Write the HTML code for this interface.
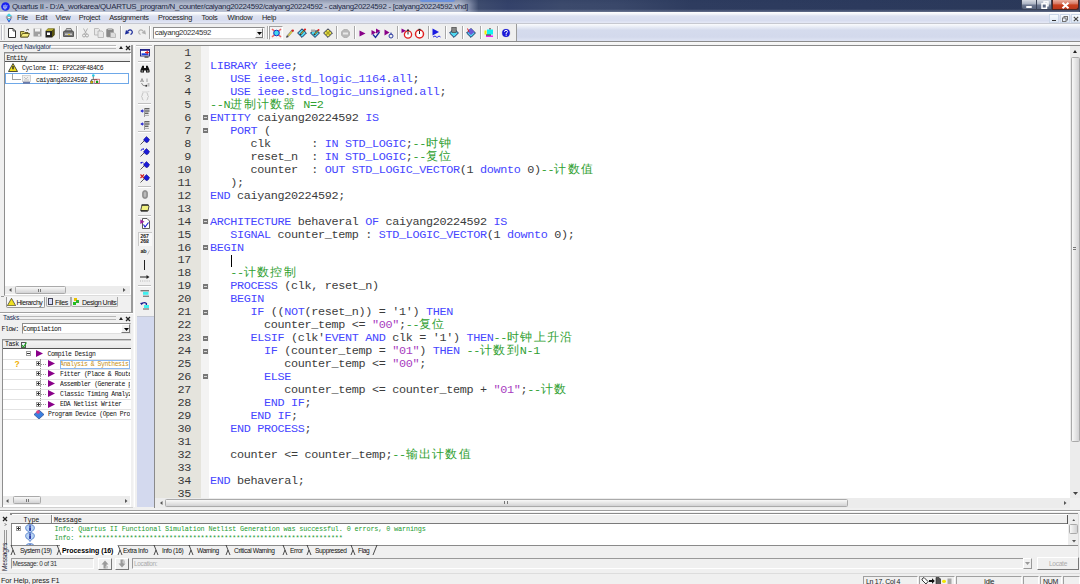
<!DOCTYPE html><html><head><meta charset="utf-8"><style>
html,body{margin:0;padding:0;}
body{width:1080px;height:584px;overflow:hidden;position:relative;background:#f0f0f0;font-family:"Liberation Sans",sans-serif;}
div{box-sizing:border-box;}
.kw{color:#4646ff}.cm{color:#30a030}.st{color:#a83cc0}.cj{letter-spacing:1.25px;font-size:12.25px}
</style></head><body>
<div style="position:absolute;left:0px;top:0px;width:1080px;height:12px;background:linear-gradient(90deg,#aab3c8 0%,#b4bccf 30%,#aeb6ca 42.6%,#7d88a4 43.5%,#3e4c6e 44.3%,#34426a 47%,#3c4a6c 52%,#3a486a 57%,#2e3c5f 64%,#2c3a5d 80%,#2a3858 100%)"></div>
<div style="position:absolute;left:0px;top:0px;width:1080px;height:12px;background:linear-gradient(rgba(40,55,90,0.25),rgba(255,255,255,0) 35%,rgba(255,255,255,0) 75%,rgba(200,205,220,0.35))"></div>
<div style="position:absolute;left:420px;top:0px;width:35px;height:2px;background:#5a8ae8;opacity:.7;border-radius:0 0 6px 6px"></div>
<svg style="position:absolute;left:0.5px;top:1.5px" width="9" height="9" viewBox="0 0 9 9"><circle cx="4.5" cy="4.5" r="4.3" fill="#1a22f0"/><path d="M2.5 6 L3 3 M4 6.5 L4.3 2.5 M5.5 6 L6 3" stroke="#9aa8f8" stroke-width="1.1"/><circle cx="4" cy="6" r="1.5" fill="#8a9af0"/></svg>
<div style="position:absolute;left:12px;top:2.51px;font:normal 7.9px/7.9px 'Liberation Sans', sans-serif;color:#232a45;letter-spacing:-0.3px;white-space:pre;">Quartus II - D:/A_workarea/QUARTUS_program/N_counter/caiyang20224592/caiyang20224592 - caiyang20224592 - [caiyang20224592.vhd]</div>
<div style="position:absolute;left:1021px;top:0px;width:16px;height:10px;background:linear-gradient(#d6dae2,#aab2c2 45%,#6d7890 55%,#59657e);border:1px solid #3a4358;border-top:none;border-radius:0 0 0 3px"></div>
<div style="position:absolute;left:1026px;top:5.5px;width:6px;height:2.5px;background:#fff;border-radius:1px"></div>
<div style="position:absolute;left:1037px;top:0px;width:15px;height:10px;background:linear-gradient(#d6dae2,#aab2c2 45%,#6d7890 55%,#59657e);border:1px solid #3a4358;border-top:none;border-left:none"></div>
<svg style="position:absolute;left:1041px;top:1px" width="8" height="8"><rect x="3" y="0.8" width="4" height="4" fill="none" stroke="#fff" stroke-width="1.4"/><rect x="1" y="2.8" width="4.5" height="4.5" fill="#5e6a84" stroke="#fff" stroke-width="1.5"/></svg>
<div style="position:absolute;left:1052px;top:0px;width:27px;height:10px;background:linear-gradient(#eab0a0,#d87a66 40%,#c8401e 55%,#b8381e);border:1px solid #50241e;border-top:none;border-radius:0 0 3px 0"></div>
<svg style="position:absolute;left:1061px;top:1.5px" width="9" height="7"><path d="M1.5 0.8 L7.5 6.2 M7.5 0.8 L1.5 6.2" stroke="#fff" stroke-width="2"/></svg>
<div style="position:absolute;left:1079px;top:0px;width:1px;height:12px;background:#3a4560"></div>
<div style="position:absolute;left:0px;top:12px;width:1080px;height:11.5px;background:linear-gradient(#ffffff 0px,#f3f5fa 2px,#dce1f0 4px,#d8ddef 8.5px,#e2e6f4 10.5px)"></div>
<div style="position:absolute;left:0px;top:23.2px;width:1080px;height:1px;background:#c6c8d0"></div>
<svg style="position:absolute;left:4.5px;top:13px" width="8" height="10" viewBox="0 0 8 10"><path d="M4 0.5 L7.5 4 L4 9.5 L0.5 4Z" fill="#a0a0a8"/><path d="M4 0.5 L7 3 L4 3.5 L1.5 2.5Z" fill="#40d8e8"/><path d="M1.5 5.5 L4 9.5 L6.5 5.5 L4 6.5Z" fill="#2040d0"/><path d="M2.5 6 L4 8 L5.5 6Z" fill="#50e0f0"/><rect x="3" y="4" width="2" height="1" fill="#fff"/></svg>
<div style="position:absolute;left:17px;top:14.24px;font:normal 7.4px/7.4px 'Liberation Sans', sans-serif;color:#222;letter-spacing:-0.25px;white-space:pre;">File</div>
<div style="position:absolute;left:35.5px;top:14.24px;font:normal 7.4px/7.4px 'Liberation Sans', sans-serif;color:#222;letter-spacing:-0.25px;white-space:pre;">Edit</div>
<div style="position:absolute;left:55.5px;top:14.24px;font:normal 7.4px/7.4px 'Liberation Sans', sans-serif;color:#222;letter-spacing:-0.25px;white-space:pre;">View</div>
<div style="position:absolute;left:78.8px;top:14.24px;font:normal 7.4px/7.4px 'Liberation Sans', sans-serif;color:#222;letter-spacing:-0.25px;white-space:pre;">Project</div>
<div style="position:absolute;left:109.2px;top:14.24px;font:normal 7.4px/7.4px 'Liberation Sans', sans-serif;color:#222;letter-spacing:-0.25px;white-space:pre;">Assignments</div>
<div style="position:absolute;left:158px;top:14.24px;font:normal 7.4px/7.4px 'Liberation Sans', sans-serif;color:#222;letter-spacing:-0.25px;white-space:pre;">Processing</div>
<div style="position:absolute;left:201.5px;top:14.24px;font:normal 7.4px/7.4px 'Liberation Sans', sans-serif;color:#222;letter-spacing:-0.25px;white-space:pre;">Tools</div>
<div style="position:absolute;left:227.5px;top:14.24px;font:normal 7.4px/7.4px 'Liberation Sans', sans-serif;color:#222;letter-spacing:-0.25px;white-space:pre;">Window</div>
<div style="position:absolute;left:262px;top:14.24px;font:normal 7.4px/7.4px 'Liberation Sans', sans-serif;color:#222;letter-spacing:-0.25px;white-space:pre;">Help</div>
<div style="position:absolute;left:1049px;top:14px;width:9.5px;height:9px;background:linear-gradient(#f8fbfe,#dfe9f6);border:1px solid #cbd7e8"></div>
<div style="position:absolute;left:1060px;top:14px;width:9.5px;height:9px;background:linear-gradient(#f8fbfe,#dfe9f6);border:1px solid #cbd7e8"></div>
<div style="position:absolute;left:1071px;top:14px;width:9.5px;height:9px;background:linear-gradient(#f8fbfe,#dfe9f6);border:1px solid #cbd7e8"></div>
<div style="position:absolute;left:1051.5px;top:19.5px;width:4.5px;height:1.2px;background:#333"></div>
<svg style="position:absolute;left:1062px;top:15.5px" width="6" height="6"><rect x="2" y="0.5" width="3.5" height="3.5" fill="none" stroke="#666" stroke-width="0.9"/><rect x="0.5" y="2" width="3.5" height="3.5" fill="#e8eef8" stroke="#666" stroke-width="0.9"/></svg>
<svg style="position:absolute;left:1072.5px;top:16px" width="6" height="6"><path d="M0.8 0.8 L5.2 5.2 M5.2 0.8 L0.8 5.2" stroke="#444" stroke-width="1.1"/></svg>
<div style="position:absolute;left:0px;top:24.2px;width:1080px;height:17px;background:linear-gradient(#fafbfd 0px,#eef1f8 2px,#d5dbed 6px,#d3d9ec 13px,#dde2f2 16px)"></div>
<div style="position:absolute;left:0px;top:24px;width:516px;height:17.2px;background:#efefef"></div>
<div style="position:absolute;left:516px;top:24px;width:1px;height:17.2px;background:#9a9a9a"></div>
<div style="position:absolute;left:0px;top:41px;width:1080px;height:1px;background:#8c8c8c"></div>
<div style="position:absolute;left:1px;top:25px;width:2px;height:15px;border-left:1px solid #c0c0c8;border-right:1px solid #fff"></div>
<div style="position:absolute;left:3.5px;top:25px;width:1px;height:15px;background:#d0d0d0"></div>
<div style="position:absolute;left:59px;top:25.5px;width:2px;height:13.5px;border-left:1px solid #a8a8a8;border-right:1px solid #fff"></div>
<div style="position:absolute;left:76px;top:25.5px;width:2px;height:13.5px;border-left:1px solid #a8a8a8;border-right:1px solid #fff"></div>
<div style="position:absolute;left:120px;top:25.5px;width:2px;height:13.5px;border-left:1px solid #a8a8a8;border-right:1px solid #fff"></div>
<div style="position:absolute;left:149px;top:25.5px;width:2px;height:13.5px;border-left:1px solid #a8a8a8;border-right:1px solid #fff"></div>
<div style="position:absolute;left:267px;top:25.5px;width:2px;height:13.5px;border-left:1px solid #a8a8a8;border-right:1px solid #fff"></div>
<div style="position:absolute;left:336px;top:25.5px;width:2px;height:13.5px;border-left:1px solid #a8a8a8;border-right:1px solid #fff"></div>
<div style="position:absolute;left:354px;top:25.5px;width:2px;height:13.5px;border-left:1px solid #a8a8a8;border-right:1px solid #fff"></div>
<div style="position:absolute;left:397px;top:25.5px;width:2px;height:13.5px;border-left:1px solid #a8a8a8;border-right:1px solid #fff"></div>
<div style="position:absolute;left:428px;top:25.5px;width:2px;height:13.5px;border-left:1px solid #a8a8a8;border-right:1px solid #fff"></div>
<div style="position:absolute;left:445px;top:25.5px;width:2px;height:13.5px;border-left:1px solid #a8a8a8;border-right:1px solid #fff"></div>
<div style="position:absolute;left:462px;top:25.5px;width:2px;height:13.5px;border-left:1px solid #a8a8a8;border-right:1px solid #fff"></div>
<div style="position:absolute;left:480px;top:25.5px;width:2px;height:13.5px;border-left:1px solid #a8a8a8;border-right:1px solid #fff"></div>
<div style="position:absolute;left:497px;top:25.5px;width:2px;height:13.5px;border-left:1px solid #a8a8a8;border-right:1px solid #fff"></div>
<svg style="position:absolute;left:8px;top:27.5px" width="8" height="10" viewBox="0 0 8 10"><path d="M0.5 0.5 H5 L7.5 3 V9.5 H0.5Z" fill="#fff" stroke="#333" stroke-width="1"/><path d="M5 0.5 V3 H7.5" fill="none" stroke="#333" stroke-width="0.8"/></svg>
<svg style="position:absolute;left:20px;top:27.5px" width="10" height="10" viewBox="0 0 10 10"><path d="M0.5 3.5 H4 L5 4.5 H8 V9 H0.5Z" fill="#d8d060" stroke="#4a4210" stroke-width="0.8"/><path d="M0.5 9 L2.5 5.5 H9.5 L8 9Z" fill="#f4ec80" stroke="#4a4210" stroke-width="0.8"/><path d="M6 2.5 Q7.5 0.5 9 2" fill="none" stroke="#333" stroke-width="0.8"/></svg>
<svg style="position:absolute;left:33px;top:28px" width="9" height="9" viewBox="0 0 9 9"><rect x="0.5" y="0.5" width="8" height="8" fill="#a0a0a0"/><rect x="2" y="0.5" width="5" height="3" fill="#f4f4f4"/><rect x="5" y="6" width="2" height="2" fill="#ddd"/></svg>
<svg style="position:absolute;left:45px;top:27.5px" width="10" height="10" viewBox="0 0 10 10"><path d="M0.5 3 L3 0.5 H9.5 V7 L7 9.5 H0.5Z" fill="#222"/><path d="M0.5 3 L3 0.5 H9.5 L7 3Z" fill="#b0a830"/><path d="M7 3 L9.5 0.5 V7 L7 9.5Z" fill="#5a5410"/><rect x="2" y="4.5" width="3" height="2.5" fill="#fff"/></svg>
<svg style="position:absolute;left:63px;top:27.5px" width="11" height="10" viewBox="0 0 11 10"><path d="M2.5 3 L3.5 0.5 H8 L9 3Z" fill="#ccc" stroke="#555" stroke-width="0.7"/><path d="M0.5 4 Q0.5 3 2 3 H9 Q10.5 3 10.5 4 V8.5 H0.5Z" fill="#777" stroke="#333" stroke-width="0.7"/><rect x="2" y="5.5" width="7" height="1.5" fill="#c8c8c8"/><rect x="5" y="6" width="2" height="1" fill="#d8c020"/></svg>
<svg style="position:absolute;left:82px;top:27.5px" width="7" height="10" viewBox="0 0 7 10"><path d="M1.5 0.5 L4.5 6 M5.5 0.5 L2.5 6" stroke="#a8a8a8" stroke-width="0.9"/><circle cx="2" cy="7.5" r="1.5" fill="none" stroke="#a8a8a8"/><circle cx="5" cy="7.5" r="1.5" fill="none" stroke="#a8a8a8"/></svg>
<svg style="position:absolute;left:94px;top:27.5px" width="10" height="10" viewBox="0 0 10 10"><path d="M0.5 0.5 H4.5 L5.5 1.5 V7 H0.5Z" fill="#e8e8e8" stroke="#b0b0b0" stroke-width="0.8"/><path d="M4 3 H8 L9.5 4.5 V9.5 H4Z" fill="#e8e8e8" stroke="#b0b0b0" stroke-width="0.8"/></svg>
<svg style="position:absolute;left:106px;top:28px" width="10" height="10" viewBox="0 0 10 10"><rect x="0.5" y="1" width="7" height="8" rx="1" fill="#888" stroke="#999" stroke-width="0.6"/><rect x="2" y="0" width="4" height="2" fill="#bbb"/><path d="M4.5 4.5 H8 L9.5 6 V9.5 H4.5Z" fill="#ddd" stroke="#aaa" stroke-width="0.7"/></svg>
<svg style="position:absolute;left:124.5px;top:29px" width="8" height="6" viewBox="0 0 8 6"><path d="M2.5 2.5 Q5 -0.5 7 2 Q8 4.5 5.5 5.5" fill="none" stroke="#1a2a9a" stroke-width="1.2"/><path d="M0 5.5 L1 1 L4.5 4Z" fill="#1a2a9a"/></svg>
<svg style="position:absolute;left:138px;top:29px" width="8" height="6" viewBox="0 0 8 6"><path d="M5.5 2.5 Q3 -0.5 1 2 Q0 4.5 2.5 5.5" fill="none" stroke="#b0b0b0" stroke-width="1.1"/><path d="M8 5.5 L7 1 L3.5 4Z" fill="#b0b0b0"/></svg>
<div style="position:absolute;left:152.5px;top:27px;width:112px;height:11.5px;background:#fff;border:1px solid #8d8d8d;border-right-color:#ddd;border-bottom-color:#ddd"></div>
<div style="position:absolute;left:255px;top:28px;width:8px;height:9.5px;background:#f0f0f0;border:1px solid #fff;border-right-color:#777;border-bottom-color:#777"></div>
<svg style="position:absolute;left:256.5px;top:31.8px" width="5" height="3"><polygon points="0,0 5,0 2.5,3" fill="#000"/></svg>
<div style="position:absolute;left:154.7px;top:29.30px;font:normal 7.8px/7.8px 'Liberation Sans', sans-serif;color:#333;letter-spacing:-0.35px;white-space:pre;">caiyang20224592</div>
<div style="position:absolute;left:269px;top:26px;width:13.5px;height:13.5px;background:#f4f4f4;border:1px solid #a0a0a0;border-right-color:#fff;border-bottom-color:#fff"></div>
<svg style="position:absolute;left:271px;top:28px" width="11" height="10" viewBox="0 0 11 10"><path d="M1 1 L10 9 M10 1 L1 9" stroke="#f04848" stroke-width="1.6" opacity="0.85"/><circle cx="5.5" cy="5" r="2.8" fill="#40d8f0" stroke="#1a30c0" stroke-width="1"/></svg>
<svg style="position:absolute;left:286px;top:28.5px" width="8" height="9" viewBox="0 0 8 9"><path d="M1 8 L6.5 1.5" stroke="#888" stroke-width="2.2"/><path d="M2.5 6.5 L6 2.5" stroke="#e0d040" stroke-width="1.4"/><circle cx="6.8" cy="1.6" r="1.2" fill="#d02020"/><path d="M0.5 8.5 L1.5 7" stroke="#333" stroke-width="1.2"/></svg>
<svg style="position:absolute;left:297px;top:27.5px" width="10" height="10" viewBox="0 0 10 10"><path d="M5 0.8 L9.4 5 L5 9.4 L0.6 5Z" fill="#50d8f0" stroke="#101850" stroke-width="0.9"/><path d="M3 7 L7.5 2" stroke="#333" stroke-width="1.8"/><path d="M3.8 6 L7 2.7" stroke="#e0d040" stroke-width="0.9"/><circle cx="8" cy="1.5" r="1.1" fill="#e02020"/></svg>
<svg style="position:absolute;left:310px;top:27.5px" width="10" height="10" viewBox="0 0 10 10"><path d="M0.5 5 L5 9.4 L9.5 5 L7 3 H3Z" fill="#50d8f0" stroke="#101850" stroke-width="0.9"/><rect x="1" y="1.5" width="4" height="2.5" fill="#aaa"/><path d="M4 7 L8 2.5" stroke="#333" stroke-width="1.8"/><path d="M4.8 6 L7.5 3" stroke="#e0d040" stroke-width="0.9"/><circle cx="8.5" cy="2" r="1" fill="#e02020"/></svg>
<svg style="position:absolute;left:323px;top:27.5px" width="10" height="10" viewBox="0 0 10 10"><path d="M5 0.8 L9.4 5 L5 9.4 L0.6 5Z" fill="#e8e050" stroke="#101850" stroke-width="0.9"/><path d="M3 3 L7 7 M7 3 L3 7" stroke="#a8a020" stroke-width="1.2"/></svg>
<svg style="position:absolute;left:341px;top:28.5px" width="9" height="9" viewBox="0 0 9 9"><path d="M2.8 0.5 H6.2 L8.5 2.8 V6.2 L6.2 8.5 H2.8 L0.5 6.2 V2.8Z" fill="#b8b8b8" stroke="#a0a0a0" stroke-width="0.6"/><rect x="2" y="3.5" width="5" height="2" fill="#e8e8e8"/></svg>
<svg style="position:absolute;left:358.5px;top:29.5px" width="7" height="7" viewBox="0 0 7 7"><path d="M0.5 0.5 L6.5 3.5 L0.5 6.5Z" fill="#880088"/></svg>
<svg style="position:absolute;left:370.5px;top:27.5px" width="10" height="11" viewBox="0 0 10 11"><path d="M0.5 2 L5 4.5 L0.5 7Z" fill="#880088"/><path d="M5 0.5 L9.5 3 L5 5.5Z" fill="#880088"/><path d="M2 6.5 L4.5 9.5 L8.5 4" fill="none" stroke="#1a2a9a" stroke-width="1.3"/></svg>
<svg style="position:absolute;left:383.5px;top:28.5px" width="10" height="10" viewBox="0 0 10 10"><path d="M0.5 0.5 L5.5 3.5 L0.5 6.5Z" fill="#880088"/><circle cx="7" cy="7" r="2" fill="none" stroke="#1a2a9a" stroke-width="0.9"/><path d="M7 3.5 V6" stroke="#1a2a9a" stroke-width="0.9"/></svg>
<svg style="position:absolute;left:400.5px;top:27.5px" width="12" height="11" viewBox="0 0 12 11"><path d="M0.5 0.5 L5 2.8 L0.5 5Z" fill="#880088"/><circle cx="7" cy="6.5" r="3.6" fill="#fff" stroke="#e02020" stroke-width="1.3"/><path d="M7 3.5 V6.5" stroke="#222" stroke-width="1"/><rect x="6" y="1.5" width="2" height="1.5" fill="#222"/></svg>
<svg style="position:absolute;left:413.5px;top:27.5px" width="11" height="11" viewBox="0 0 11 11"><circle cx="5.5" cy="6" r="4" fill="#fff" stroke="#e02020" stroke-width="1.5"/><path d="M5.5 3 V6" stroke="#222" stroke-width="1"/><rect x="4.5" y="0.8" width="2" height="1.5" fill="#222"/></svg>
<svg style="position:absolute;left:431.5px;top:28px" width="9" height="10" viewBox="0 0 9 10"><path d="M0.5 0.5 L7 4 L0.5 7.5Z" fill="#1a1ae0"/><path d="M1 9 L3 8 L5 9.5 L7 8 L8.5 9" fill="none" stroke="#1a1ae0" stroke-width="0.9"/></svg>
<svg style="position:absolute;left:448.5px;top:27px" width="10" height="11" viewBox="0 0 10 11"><path d="M5 1.5 L9.4 6 L5 10.4 L0.6 6Z" fill="#50d8f0" stroke="#101850" stroke-width="0.9"/><rect x="2.8" y="0.5" width="4.4" height="5" fill="#888" stroke="#333" stroke-width="0.6"/></svg>
<svg style="position:absolute;left:466px;top:27px" width="10" height="11" viewBox="0 0 10 11"><path d="M5 1.5 L9.4 6 L5 10.4 L0.6 6Z" fill="#50d8f0" stroke="#101850" stroke-width="0.9"/><path d="M2 3 L5 1.5 L8.5 5 L5 8 L2.5 6Z" fill="#6a5ad8"/><path d="M1.5 1.5 L3 5" stroke="#e02020" stroke-width="1"/></svg>
<svg style="position:absolute;left:483.5px;top:27.5px" width="10" height="10" viewBox="0 0 10 10"><rect x="3" y="1.5" width="6" height="5" fill="#10f0f0"/><rect x="0.5" y="2.5" width="2" height="4" fill="#f0f000"/><rect x="5.5" y="0" width="1" height="1.5" fill="#222"/><rect x="2" y="7.5" width="7" height="1.5" fill="#f020f0"/><rect x="2" y="6.5" width="5" height="1" fill="#222"/></svg>
<svg style="position:absolute;left:500.5px;top:27.5px" width="10" height="10" viewBox="0 0 10 10"><circle cx="5" cy="5" r="4.6" fill="#d8d8e0"/><circle cx="5" cy="5" r="3.9" fill="#1a1ad8"/><path d="M3.5 3.8 Q3.5 2.3 5 2.3 Q6.5 2.3 6.5 3.6 Q6.5 4.6 5.2 5 V6" fill="none" stroke="#fff" stroke-width="1"/><rect x="4.6" y="6.6" width="1.2" height="1.1" fill="#fff"/></svg>
<div style="position:absolute;left:0px;top:42px;width:1080px;height:3.5px;background:linear-gradient(#fafafa,#f0f0f0)"></div>
<div style="position:absolute;left:3px;top:43.61px;font:normal 6.6px/6.6px 'Liberation Sans', sans-serif;color:#223355;letter-spacing:-0.15px;white-space:pre;">Project Navigator</div>
<div style="position:absolute;left:51px;top:45px;width:65px;height:4px;border-top:1px solid #b8b8b8;border-bottom:1px solid #b8b8b8"></div>
<div style="position:absolute;left:50.5px;top:46px;width:66px;height:1px;background:#fff"></div>
<svg style="position:absolute;left:118.5px;top:46px" width="4" height="3"><polygon points="0,3 4,3 2.0,0" fill="#222"/></svg>
<svg style="position:absolute;left:125px;top:44.5px" width="6" height="6" viewBox="0 0 6 6"><path d="M1 1 L5 5 M5 1 L1 5" stroke="#222" stroke-width="1.3"/></svg>
<div style="position:absolute;left:4px;top:51.5px;width:127.5px;height:244px;background:#fff;border:1px solid #8e8e8e;border-right-color:#dcdcdc;border-bottom-color:#dcdcdc"></div>
<div style="position:absolute;left:5px;top:52.5px;width:125px;height:9px;background:linear-gradient(#f6f6f6,#e9e9e9);border-top:1px solid #ccc;border-bottom:1px solid #555"></div>
<div style="position:absolute;left:6.5px;top:55.54px;font:normal 6.6px/6.6px 'Liberation Mono', monospace;color:#111;letter-spacing:-0.55px;white-space:pre;">Entity</div>
<svg style="position:absolute;left:8px;top:63px" width="10" height="9"><polygon points="5,0.5 9.5,8.5 0.5,8.5" fill="#f0e020" stroke="#222" stroke-width="0.8"/><rect x="4.3" y="3" width="1.4" height="3.3" fill="#222"/></svg>
<div style="position:absolute;left:22px;top:66.49px;font:normal 6.4px/6.4px 'Liberation Mono', monospace;color:#111;letter-spacing:-0.46px;white-space:pre;">Cyclone II: EP2C20F484C6</div>
<div style="position:absolute;left:4.5px;top:73px;width:124px;height:11px;border:1px solid #6ea8e8"></div>
<div style="position:absolute;left:12px;top:74px;width:1px;height:5px;background:#a0a0a0"></div>
<div style="position:absolute;left:12px;top:78.5px;width:9px;height:1px;background:#a0a0a0"></div>
<svg style="position:absolute;left:22px;top:74.5px" width="9" height="9" viewBox="0 0 9 9"><rect x="0.5" y="0.5" width="8" height="6" fill="#f0f0f0" stroke="#c8c8c8" stroke-width="0.8"/><path d="M2 2 L4 4 L6 2 M2 5 H7" stroke="#b0b0b0" stroke-width="0.7" fill="none"/><rect x="1" y="6.8" width="7" height="2" fill="#6a7aa8"/></svg>
<div style="position:absolute;left:36px;top:77.69px;font:normal 6.4px/6.4px 'Liberation Mono', monospace;color:#111;letter-spacing:-0.42px;white-space:pre;">caiyang20224592</div>
<svg style="position:absolute;left:90px;top:74px" width="10" height="10" viewBox="0 0 10 10"><circle cx="3.3" cy="1.5" r="1.3" fill="#20c8e0"/><path d="M3.3 2.5 V5.5 M1.5 5.5 H7 M1.5 5.5 V7 M7 5.5 V7" stroke="#444" stroke-width="0.7" fill="none"/><rect x="0.5" y="7" width="2.5" height="2.5" fill="#d8b800" stroke="#333" stroke-width="0.4"/><rect x="4.8" y="5.2" width="4.5" height="4.3" fill="none" stroke="#c04040" stroke-width="0.7"/><rect x="6" y="7" width="2.2" height="2" fill="#10a010"/></svg>
<div style="position:absolute;left:5px;top:285.5px;width:125px;height:8.5px;background:#ececec"></div>
<svg style="position:absolute;left:8.5px;top:287.8px" width="3" height="4"><polygon points="2.5,0 2.5,4 0,2" fill="#555"/></svg>
<div style="position:absolute;left:15px;top:286px;width:51px;height:7.5px;background:linear-gradient(#f8f8f8,#e6e6e6 50%,#d2d2d4);border:1px solid #aaa;border-radius:1.5px"></div>
<div style="position:absolute;left:38px;top:288.5px;width:3px;height:3px;border-left:1px solid #777;border-right:1px solid #777"></div>
<svg style="position:absolute;left:123px;top:287.8px" width="3" height="4"><polygon points="0,0 0,4 2.5,2" fill="#555"/></svg>
<div style="position:absolute;left:1px;top:296px;width:3px;height:1px;background:#999"></div>
<div style="position:absolute;left:6px;top:296.5px;width:38.5px;height:11px;background:#f8f8f8;border:1px solid #999;border-top:none;border-radius:0 0 2px 2px"></div>
<svg style="position:absolute;left:7px;top:297.5px" width="9" height="8"><polygon points="4.5,0.3 8.7,7.7 0.3,7.7" fill="#f0e020" stroke="#333" stroke-width="0.7"/></svg>
<div style="position:absolute;left:16.5px;top:298.87px;font:normal 7px/7px 'Liberation Sans', sans-serif;color:#111;letter-spacing:-0.45px;white-space:pre;">Hierarchy</div>
<div style="position:absolute;left:45.5px;top:297px;width:25px;height:10px;background:#efefef;border:1px solid #aaa;border-top:none;border-radius:0 0 2px 2px"></div>
<div style="position:absolute;left:48px;top:298px;width:5px;height:7px;background:#d8dcf8;border:1px solid #445"></div>
<div style="position:absolute;left:55px;top:298.87px;font:normal 7px/7px 'Liberation Sans', sans-serif;color:#111;letter-spacing:-0.4px;white-space:pre;">Files</div>
<div style="position:absolute;left:71px;top:297px;width:47px;height:10px;background:#efefef;border:1px solid #aaa;border-top:none;border-radius:0 0 2px 2px"></div>
<div style="position:absolute;left:74px;top:298px;width:3px;height:3px;background:#e8c000"></div>
<div style="position:absolute;left:76px;top:300px;width:3px;height:3px;background:#30b030"></div>
<div style="position:absolute;left:73px;top:302px;width:3px;height:3px;background:#20c020"></div>
<div style="position:absolute;left:82px;top:298.87px;font:normal 7px/7px 'Liberation Sans', sans-serif;color:#111;letter-spacing:-0.45px;white-space:pre;">Design Units</div>
<div style="position:absolute;left:0px;top:311.5px;width:133px;height:2px;border-top:1px solid #a0a0a0;border-bottom:1px solid #fff"></div>
<div style="position:absolute;left:3px;top:314.61px;font:normal 6.6px/6.6px 'Liberation Sans', sans-serif;color:#223355;letter-spacing:-0.15px;white-space:pre;">Tasks</div>
<div style="position:absolute;left:19px;top:316px;width:97px;height:4px;border-top:1px solid #b8b8b8;border-bottom:1px solid #b8b8b8"></div>
<svg style="position:absolute;left:118.5px;top:317px" width="4" height="3"><polygon points="0,3 4,3 2.0,0" fill="#222"/></svg>
<svg style="position:absolute;left:125px;top:315.5px" width="6" height="6" viewBox="0 0 6 6"><path d="M1 1 L5 5 M5 1 L1 5" stroke="#222" stroke-width="1.3"/></svg>
<div style="position:absolute;left:1.5px;top:326.74px;font:normal 6.6px/6.6px 'Liberation Mono', monospace;color:#111;letter-spacing:-0.5px;white-space:pre;">Flow:</div>
<div style="position:absolute;left:21.5px;top:323px;width:109px;height:11px;background:#fff;border:1px solid #8d8d8d;border-right-color:#e0e0e0;border-bottom-color:#e0e0e0"></div>
<div style="position:absolute;left:121px;top:324px;width:9px;height:9px;background:#efefef;border:1px solid #fff;border-right-color:#777;border-bottom-color:#777"></div>
<svg style="position:absolute;left:123.5px;top:327.8px" width="5" height="3"><polygon points="0,0 5,0 2.5,3" fill="#000"/></svg>
<div style="position:absolute;left:23px;top:326.94px;font:normal 6.6px/6.6px 'Liberation Mono', monospace;color:#111;letter-spacing:-0.5px;white-space:pre;">Compilation</div>
<div style="position:absolute;left:2px;top:339px;width:129px;height:168px;background:#fff;border:1px solid #8e8e8e;border-right:none;border-bottom:none"></div>
<div style="position:absolute;left:3px;top:340px;width:128px;height:9px;background:linear-gradient(#f4f4f4,#e8e8e8);border-top:1px solid #ccc;border-bottom:1px solid #555"></div>
<div style="position:absolute;left:5px;top:342.24px;font:normal 6.6px/6.6px 'Liberation Mono', monospace;color:#111;letter-spacing:-0.55px;white-space:pre;">Task</div>
<div style="position:absolute;left:20.5px;top:341.5px;width:5px;height:6px;border:1px solid #555;background:#eef"></div>
<svg style="position:absolute;left:20.5px;top:341.5px" width="6" height="6" viewBox="0 0 6 6"><path d="M1 3 L2.5 5 L5.5 0.5" fill="none" stroke="#2a2" stroke-width="1.2"/></svg>
<div style="position:absolute;left:3px;top:358.5px;width:128px;height:1px;background:#e2e2e2"></div>
<div style="position:absolute;left:3px;top:368.6px;width:128px;height:1px;background:#e2e2e2"></div>
<div style="position:absolute;left:3px;top:378.6px;width:128px;height:1px;background:#e2e2e2"></div>
<div style="position:absolute;left:3px;top:388.6px;width:128px;height:1px;background:#e2e2e2"></div>
<div style="position:absolute;left:3px;top:399px;width:128px;height:1px;background:#e2e2e2"></div>
<div style="position:absolute;left:3px;top:409.4px;width:128px;height:1px;background:#e2e2e2"></div>
<div style="position:absolute;left:3px;top:419.4px;width:128px;height:1px;background:#e2e2e2"></div>
<div style="position:absolute;left:26px;top:351px;width:5px;height:5px;border:1px solid #a0a0a0;background:#fff"></div>
<div style="position:absolute;left:27px;top:353px;width:3px;height:1px;background:#333"></div>
<svg style="position:absolute;left:36px;top:350px" width="7" height="7"><polygon points="0,0 7,3.5 0,7" fill="#8a008a"/></svg>
<div style="position:absolute;left:47.5px;top:351.59px;font:normal 6.4px/6.4px 'Liberation Mono', monospace;color:#111;letter-spacing:-0.42px;white-space:pre;">Compile Design</div>
<div style="position:absolute;left:39.5px;top:358.5px;width:1px;height:46px;border-left:1px dotted #999"></div>
<div style="position:absolute;left:14.5px;top:359.80px;font:bold 8.5px/8.5px 'Liberation Sans', sans-serif;color:#f0b000;letter-spacing:0px;white-space:pre;">?</div>
<div style="position:absolute;left:36px;top:361.0px;width:5px;height:5px;border:1px solid #a0a0a0;background:#fff"></div>
<div style="position:absolute;left:37px;top:363.0px;width:3px;height:1px;background:#333"></div>
<div style="position:absolute;left:38px;top:362.0px;width:1px;height:3px;background:#333"></div>
<div style="position:absolute;left:41px;top:363.5px;width:5px;height:1px;border-top:1px dotted #999"></div>
<svg style="position:absolute;left:48px;top:360.3px" width="7" height="7"><polygon points="0,0 7,3.5 0,7" fill="#8a008a"/></svg>
<div style="position:absolute;left:60px;top:359.59px;font:normal 6.4px/10px 'Liberation Mono', monospace;color:#c89010;letter-spacing:-0.42px;white-space:pre;width:69.5px;overflow:hidden">Analysis & Synthesis</div>
<div style="position:absolute;left:36px;top:371.1px;width:5px;height:5px;border:1px solid #a0a0a0;background:#fff"></div>
<div style="position:absolute;left:37px;top:373.1px;width:3px;height:1px;background:#333"></div>
<div style="position:absolute;left:38px;top:372.1px;width:1px;height:3px;background:#333"></div>
<div style="position:absolute;left:41px;top:373.6px;width:5px;height:1px;border-top:1px dotted #999"></div>
<svg style="position:absolute;left:48px;top:370.40000000000003px" width="7" height="7"><polygon points="0,0 7,3.5 0,7" fill="#8a008a"/></svg>
<div style="position:absolute;left:60px;top:369.69px;font:normal 6.4px/10px 'Liberation Mono', monospace;color:#111;letter-spacing:-0.42px;white-space:pre;width:69.5px;overflow:hidden">Fitter (Place & Route)</div>
<div style="position:absolute;left:36px;top:381.1px;width:5px;height:5px;border:1px solid #a0a0a0;background:#fff"></div>
<div style="position:absolute;left:37px;top:383.1px;width:3px;height:1px;background:#333"></div>
<div style="position:absolute;left:38px;top:382.1px;width:1px;height:3px;background:#333"></div>
<div style="position:absolute;left:41px;top:383.6px;width:5px;height:1px;border-top:1px dotted #999"></div>
<svg style="position:absolute;left:48px;top:380.40000000000003px" width="7" height="7"><polygon points="0,0 7,3.5 0,7" fill="#8a008a"/></svg>
<div style="position:absolute;left:60px;top:379.69px;font:normal 6.4px/10px 'Liberation Mono', monospace;color:#111;letter-spacing:-0.42px;white-space:pre;width:69.5px;overflow:hidden">Assembler (Generate programming files)</div>
<div style="position:absolute;left:36px;top:391.1px;width:5px;height:5px;border:1px solid #a0a0a0;background:#fff"></div>
<div style="position:absolute;left:37px;top:393.1px;width:3px;height:1px;background:#333"></div>
<div style="position:absolute;left:38px;top:392.1px;width:1px;height:3px;background:#333"></div>
<div style="position:absolute;left:41px;top:393.6px;width:5px;height:1px;border-top:1px dotted #999"></div>
<svg style="position:absolute;left:48px;top:390.40000000000003px" width="7" height="7"><polygon points="0,0 7,3.5 0,7" fill="#8a008a"/></svg>
<div style="position:absolute;left:60px;top:389.69px;font:normal 6.4px/10px 'Liberation Mono', monospace;color:#111;letter-spacing:-0.42px;white-space:pre;width:69.5px;overflow:hidden">Classic Timing Analyzer</div>
<div style="position:absolute;left:36px;top:401.5px;width:5px;height:5px;border:1px solid #a0a0a0;background:#fff"></div>
<div style="position:absolute;left:37px;top:403.5px;width:3px;height:1px;background:#333"></div>
<div style="position:absolute;left:38px;top:402.5px;width:1px;height:3px;background:#333"></div>
<div style="position:absolute;left:41px;top:404px;width:5px;height:1px;border-top:1px dotted #999"></div>
<svg style="position:absolute;left:48px;top:400.8px" width="7" height="7"><polygon points="0,0 7,3.5 0,7" fill="#8a008a"/></svg>
<div style="position:absolute;left:60px;top:400.09px;font:normal 6.4px/10px 'Liberation Mono', monospace;color:#111;letter-spacing:-0.42px;white-space:pre;width:69.5px;overflow:hidden">EDA Netlist Writer</div>
<div style="position:absolute;left:59.5px;top:359.5px;width:70px;height:9.5px;border:1px solid #8ab8f0"></div>
<svg style="position:absolute;left:34px;top:410px" width="10" height="9"><polygon points="5,0 10,4.5 5,9 0,4.5" fill="#3b7fe0" stroke="#1a3a80" stroke-width="0.6"/><circle cx="4" cy="2" r="1.8" fill="#e04080"/></svg>
<div style="position:absolute;left:48px;top:410.29px;font:normal 6.4px/10px 'Liberation Mono', monospace;color:#111;letter-spacing:-0.42px;white-space:pre;width:82px;overflow:hidden">Program Device (Open Programmer)</div>
<div style="position:absolute;left:3px;top:495.5px;width:127px;height:9.5px;background:#ececec"></div>
<svg style="position:absolute;left:6.0px;top:498.5px" width="3" height="4"><polygon points="2.5,0 2.5,4 0,2" fill="#555"/></svg>
<div style="position:absolute;left:13.4px;top:496px;width:28px;height:8px;background:linear-gradient(#f8f8f8,#e6e6e6 50%,#d2d2d4);border:1px solid #aaa;border-radius:1.5px"></div>
<div style="position:absolute;left:26px;top:498.5px;width:3px;height:3px;border-left:1px solid #777;border-right:1px solid #777"></div>
<svg style="position:absolute;left:124.5px;top:498.5px" width="3" height="4"><polygon points="0,0 0,4 2.5,2" fill="#555"/></svg>
<div style="position:absolute;left:0px;top:506.5px;width:133px;height:1px;background:#d0d0d0"></div>
<div style="position:absolute;left:131px;top:45px;width:1.5px;height:268px;background:#9a9a9a"></div>
<div style="position:absolute;left:132.5px;top:45px;width:1px;height:462px;background:#f6f6f6"></div>
<div style="position:absolute;left:133.5px;top:45px;width:1px;height:462px;background:#ffffff"></div>
<div style="position:absolute;left:134.5px;top:45px;width:19px;height:271px;background:#f0f0f0"></div>
<div style="position:absolute;left:137px;top:316px;width:16.5px;height:191px;background:#d3d9ee;border-top:1px solid #c4c8d4"></div>
<div style="position:absolute;left:134.5px;top:316px;width:2.5px;height:191px;background:#f0f0f0"></div>
<div style="position:absolute;left:153.5px;top:45px;width:1px;height:462px;background:#a0a0a0"></div>
<div style="position:absolute;left:136px;top:44.5px;width:16px;height:2px;border-top:1px solid #bbb;border-bottom:1px solid #fff"></div>
<div style="position:absolute;left:138px;top:61px;width:13px;height:2px;border-top:1px solid #c0c0c0;border-bottom:1px solid #fff"></div>
<div style="position:absolute;left:138px;top:103px;width:13px;height:2px;border-top:1px solid #c0c0c0;border-bottom:1px solid #fff"></div>
<div style="position:absolute;left:138px;top:131px;width:13px;height:2px;border-top:1px solid #c0c0c0;border-bottom:1px solid #fff"></div>
<div style="position:absolute;left:138px;top:186px;width:13px;height:2px;border-top:1px solid #c0c0c0;border-bottom:1px solid #fff"></div>
<div style="position:absolute;left:138px;top:215.3px;width:13px;height:2px;border-top:1px solid #c0c0c0;border-bottom:1px solid #fff"></div>
<div style="position:absolute;left:138px;top:285px;width:13px;height:2px;border-top:1px solid #c0c0c0;border-bottom:1px solid #fff"></div>
<svg style="position:absolute;left:140px;top:49px" width="10" height="9" viewBox="0 0 10 9"><rect x="0.5" y="0.5" width="9" height="6.5" fill="#fff" stroke="#1a1a70" stroke-width="0.9"/><rect x="0.5" y="0.5" width="9" height="1.3" fill="#1a1a90"/><rect x="1.5" y="4.3" width="7" height="1.8" fill="#1a40e0"/><path d="M5 3.5 H9 M7.2 1.8 V5.2" stroke="#e02020" stroke-width="1.2"/><rect x="4.5" y="7.3" width="4" height="1.5" fill="#555"/></svg>
<svg style="position:absolute;left:140px;top:65px" width="10" height="8" viewBox="0 0 10 8"><path d="M1 7.5 Q0 7.5 0.5 5 L2.3 0.8 H4 V7.5Z M9 7.5 Q10 7.5 9.5 5 L7.7 0.8 H6 V7.5Z" fill="#111"/><rect x="3.5" y="3" width="3" height="2.5" fill="#111"/><circle cx="2.3" cy="6" r="1" fill="#777"/><circle cx="7.7" cy="6" r="1" fill="#777"/></svg>
<svg style="position:absolute;left:140px;top:78px" width="10" height="9" viewBox="0 0 10 9"><path d="M0.5 4 L2 0.5 L3.5 4 M1 3 H3" fill="none" stroke="#888" stroke-width="0.8"/><path d="M1.5 5 Q2 8 6 8" fill="none" stroke="#777" stroke-width="0.8"/><circle cx="6.3" cy="7.8" r="1" fill="#333"/><path d="M7 0.5 V4" stroke="#888" stroke-width="0.8"/><rect x="7.5" y="5" width="2" height="3.5" fill="#bbb"/></svg>
<svg style="position:absolute;left:141px;top:90.5px" width="9" height="10" viewBox="0 0 9 10"><path d="M2.5 2 Q1.2 2 1.2 4 Q1.2 5 0.5 5.5 Q1.2 6 1.2 7 Q1.2 9 2.5 9 M5.5 2 Q6.8 2 6.8 4 Q6.8 5 7.5 5.5 Q6.8 6 6.8 7 Q6.8 9 5.5 9" fill="none" stroke="#b8b8b8" stroke-width="0.8"/><path d="M1 1 H7 L8.5 0" stroke="#c8c8c8" stroke-width="0.7" fill="none"/></svg>
<svg style="position:absolute;left:140px;top:107.5px" width="10" height="9" viewBox="0 0 10 9"><path d="M5 0.8 H9.5 M5 3 H9.5 M5 5.2 H8.5" stroke="#111" stroke-width="0.9"/><path d="M0.3 3 L2.8 1.3 V4.7Z" fill="#1a1ad0"/><path d="M2.5 3 H4" stroke="#1a1ad0" stroke-width="0.9"/><path d="M4.5 0 V9" stroke="#777" stroke-width="0.7"/><path d="M5 7.4 H9" stroke="#999" stroke-width="0.8"/></svg>
<svg style="position:absolute;left:140px;top:120.5px" width="10" height="9" viewBox="0 0 10 9"><path d="M5 0.8 H9.5 M5 3 H9.5 M5 5.2 H8.5" stroke="#111" stroke-width="0.9"/><path d="M0.3 3 L2.8 1.3 V4.7Z" fill="#1a1ad0"/><path d="M2.5 3 H4" stroke="#1a1ad0" stroke-width="0.9"/><path d="M4.5 0 V9" stroke="#777" stroke-width="0.7"/><path d="M5 7.4 H9" stroke="#999" stroke-width="0.8"/></svg>
<svg style="position:absolute;left:140px;top:136px" width="10" height="9" viewBox="0 0 10 9"><path d="M0.5 8.5 L5.5 3.5" stroke="#333" stroke-width="0.8"/><path d="M4.5 2.5 L6.5 0.5 L9.5 3.5 L8.5 5.5 Q7 7.5 5.5 6 L3.5 4Z" fill="#1a1ad8" stroke="#0a0a70" stroke-width="0.5"/></svg>
<svg style="position:absolute;left:140px;top:148px" width="10" height="9" viewBox="0 0 10 9"><path d="M0.5 8.5 L5.5 3.5" stroke="#333" stroke-width="0.8"/><path d="M4.5 2.5 L6.5 0.5 L9.5 3.5 L8.5 5.5 Q7 7.5 5.5 6 L3.5 4Z" fill="#1a1ad8" stroke="#0a0a70" stroke-width="0.5"/><path d="M1 3 Q1 0.5 3.5 1" fill="none" stroke="#1a1ad8" stroke-width="0.8"/><path d="M3 0 L4.3 1.3 L2.8 2Z" fill="#1a1ad8"/></svg>
<svg style="position:absolute;left:140px;top:161px" width="10" height="9" viewBox="0 0 10 9"><path d="M0.5 8.5 L5.5 3.5" stroke="#333" stroke-width="0.8"/><path d="M4.5 2.5 L6.5 0.5 L9.5 3.5 L8.5 5.5 Q7 7.5 5.5 6 L3.5 4Z" fill="#1a1ad8" stroke="#0a0a70" stroke-width="0.5"/><path d="M3.5 2.5 Q3.5 0.5 1 1.5" fill="none" stroke="#1a1ad8" stroke-width="0.8"/><rect x="0.5" y="1" width="1.5" height="1.5" fill="#1a1ad8"/></svg>
<svg style="position:absolute;left:140px;top:174px" width="10" height="9" viewBox="0 0 10 9"><path d="M0.5 8.5 L5.5 3.5" stroke="#333" stroke-width="0.8"/><path d="M4.5 2.5 L6.5 0.5 L9.5 3.5 L8.5 5.5 Q7 7.5 5.5 6 L3.5 4Z" fill="#1a1ad8" stroke="#0a0a70" stroke-width="0.5"/><path d="M0.5 0.5 L4 4 M4 0.5 L0.5 4" stroke="#d02020" stroke-width="1.1"/></svg>
<svg style="position:absolute;left:142px;top:190px" width="6" height="9" viewBox="0 0 6 9"><rect x="0.5" y="0.5" width="5" height="8" rx="2.5" fill="#9a9a9a" stroke="#777" stroke-width="0.6"/><rect x="2.3" y="2" width="1.4" height="5" rx="0.7" fill="#c8c8c8"/></svg>
<svg style="position:absolute;left:140px;top:203.5px" width="10" height="8" viewBox="0 0 10 8"><path d="M2 1 H8 L9 2 L8 7 H1 L0.8 6Z" fill="#f0f080" stroke="#222" stroke-width="0.8"/><path d="M1.5 1 H8.5" stroke="#222" stroke-width="1.2"/><path d="M0.8 6.8 H7.5" stroke="#222" stroke-width="1.2"/></svg>
<svg style="position:absolute;left:140px;top:217.5px" width="10" height="11" viewBox="0 0 10 11"><path d="M2.5 0.5 H7 L9.5 3 V10.5 H2.5Z" fill="#fff" stroke="#333" stroke-width="0.8"/><path d="M0.3 1.5 L4.5 3.8 L0.3 6Z" fill="#a020a0"/><path d="M3.5 6.5 L5 9 L8.5 4.5" fill="none" stroke="#1a1ad0" stroke-width="1.1"/></svg>
<div style="position:absolute;left:138px;top:231.5px;width:14px;height:14px;background:#f8f8f8;border-top:1.5px solid #c8c8c8;border-left:1px solid #c8c8c8"></div>
<div style="position:absolute;left:140.2px;top:235.44px;font:bold 5.3px/5.3px 'Liberation Mono', monospace;color:#222;letter-spacing:-0.45px;white-space:pre;">267</div>
<div style="position:absolute;left:140.2px;top:240.24px;font:bold 5.3px/5.3px 'Liberation Mono', monospace;color:#222;letter-spacing:-0.45px;white-space:pre;">268</div>
<div style="position:absolute;left:140.5px;top:249.34px;font:bold 5.5px/5.5px 'Liberation Sans', sans-serif;color:#222;letter-spacing:-0.2px;white-space:pre;">ab</div>
<svg style="position:absolute;left:146.5px;top:249.5px" width="3" height="5" viewBox="0 0 3 5"><path d="M0.5 4.5 L2.5 0.5" stroke="#999" stroke-width="0.6"/></svg>
<div style="position:absolute;left:144.2px;top:260px;width:1px;height:9.5px;background:#222"></div>
<svg style="position:absolute;left:140px;top:274.5px" width="10" height="4" viewBox="0 0 10 4"><path d="M0 2 H7" stroke="#222" stroke-width="1"/><path d="M6.5 0 L9.5 2 L6.5 4Z" fill="#222"/></svg>
<svg style="position:absolute;left:140px;top:279.5px" width="10" height="2" viewBox="0 0 10 2"><path d="M0 1 H10" stroke="#999" stroke-width="0.7" stroke-dasharray="1,1.2"/></svg>
<svg style="position:absolute;left:140px;top:290px" width="10" height="7" viewBox="0 0 10 7"><path d="M0.5 0.8 H9" stroke="#333" stroke-width="0.9"/><rect x="3" y="1.8" width="5.5" height="3" fill="#40f0f0"/><path d="M3 6.2 H9" stroke="#444" stroke-width="0.9"/></svg>
<svg style="position:absolute;left:140px;top:301.5px" width="10" height="8" viewBox="0 0 10 8"><path d="M1.5 2 Q4 -0.5 6.5 1.5 Q7 3 5 3.5" fill="none" stroke="#1a1a90" stroke-width="1.1"/><path d="M0 1 L2.8 0.5 L1.8 3.3Z" fill="#1a1a90"/><rect x="4" y="3" width="5" height="3" fill="#40f0f0"/><path d="M3 7 H9" stroke="#444" stroke-width="0.9"/></svg>
<div style="position:absolute;left:154px;top:45px;width:926px;height:463px;background:#fff;border-top:1px solid #8a8a8a;border-left:1px solid #8a8a8a"></div>
<div style="position:absolute;left:155px;top:46px;width:46px;height:452px;background:#e5e4dd"></div>
<div style="position:absolute;left:201px;top:46px;width:8px;height:452px;background:#f3f3f3"></div>
<div style="position:absolute;left:184.25px;top:48.26px;font:normal 11.8px/11.8px 'Liberation Mono', monospace;color:#383838;letter-spacing:-0.33px;white-space:pre;">1</div>
<div style="position:absolute;left:184.25px;top:61.21px;font:normal 11.8px/11.8px 'Liberation Mono', monospace;color:#383838;letter-spacing:-0.33px;white-space:pre;">2</div>
<div style="position:absolute;left:210px;top:61.21px;font:normal 11.8px/11.8px 'Liberation Mono', monospace;color:#3c3c3c;letter-spacing:-0.33px;white-space:pre;"><span class="kw">LIBRARY</span> <span class="kw">ieee</span>;</div>
<div style="position:absolute;left:184.25px;top:74.16px;font:normal 11.8px/11.8px 'Liberation Mono', monospace;color:#383838;letter-spacing:-0.33px;white-space:pre;">3</div>
<div style="position:absolute;left:210px;top:74.16px;font:normal 11.8px/11.8px 'Liberation Mono', monospace;color:#3c3c3c;letter-spacing:-0.33px;white-space:pre;">   <span class="kw">USE</span> <span class="kw">ieee</span>.<span class="kw">std_logic_1164</span>.<span class="kw">all</span>;</div>
<div style="position:absolute;left:184.25px;top:87.11px;font:normal 11.8px/11.8px 'Liberation Mono', monospace;color:#383838;letter-spacing:-0.33px;white-space:pre;">4</div>
<div style="position:absolute;left:210px;top:87.11px;font:normal 11.8px/11.8px 'Liberation Mono', monospace;color:#3c3c3c;letter-spacing:-0.33px;white-space:pre;">   <span class="kw">USE</span> <span class="kw">ieee</span>.<span class="kw">std_logic_unsigned</span>.<span class="kw">all</span>;</div>
<div style="position:absolute;left:184.25px;top:100.06px;font:normal 11.8px/11.8px 'Liberation Mono', monospace;color:#383838;letter-spacing:-0.33px;white-space:pre;">5</div>
<div style="position:absolute;left:210px;top:100.06px;font:normal 11.8px/11.8px 'Liberation Mono', monospace;color:#3c3c3c;letter-spacing:-0.33px;white-space:pre;"><span class="cm">--N<span class="cj">进制计数器</span> N=2</span></div>
<div style="position:absolute;left:184.25px;top:113.01px;font:normal 11.8px/11.8px 'Liberation Mono', monospace;color:#383838;letter-spacing:-0.33px;white-space:pre;">6</div>
<div style="position:absolute;left:203px;top:115.45px;width:5px;height:5px;background:#777"></div>
<div style="position:absolute;left:204px;top:117.45px;width:3px;height:1px;background:#d8d8d8"></div>
<div style="position:absolute;left:210px;top:113.01px;font:normal 11.8px/11.8px 'Liberation Mono', monospace;color:#3c3c3c;letter-spacing:-0.33px;white-space:pre;"><span class="kw">ENTITY</span> caiyang20224592 <span class="kw">IS</span></div>
<div style="position:absolute;left:184.25px;top:125.96px;font:normal 11.8px/11.8px 'Liberation Mono', monospace;color:#383838;letter-spacing:-0.33px;white-space:pre;">7</div>
<div style="position:absolute;left:203px;top:128.4px;width:5px;height:5px;background:#777"></div>
<div style="position:absolute;left:204px;top:130.4px;width:3px;height:1px;background:#d8d8d8"></div>
<div style="position:absolute;left:210px;top:125.96px;font:normal 11.8px/11.8px 'Liberation Mono', monospace;color:#3c3c3c;letter-spacing:-0.33px;white-space:pre;">   <span class="kw">PORT</span> (</div>
<div style="position:absolute;left:184.25px;top:138.91px;font:normal 11.8px/11.8px 'Liberation Mono', monospace;color:#383838;letter-spacing:-0.33px;white-space:pre;">8</div>
<div style="position:absolute;left:210px;top:138.91px;font:normal 11.8px/11.8px 'Liberation Mono', monospace;color:#3c3c3c;letter-spacing:-0.33px;white-space:pre;">      clk      : <span class="kw">IN</span> <span class="kw">STD_LOGIC</span>;<span class="cm">--<span class="cj">时钟</span></span></div>
<div style="position:absolute;left:184.25px;top:151.86px;font:normal 11.8px/11.8px 'Liberation Mono', monospace;color:#383838;letter-spacing:-0.33px;white-space:pre;">9</div>
<div style="position:absolute;left:210px;top:151.86px;font:normal 11.8px/11.8px 'Liberation Mono', monospace;color:#3c3c3c;letter-spacing:-0.33px;white-space:pre;">      reset_n  : <span class="kw">IN</span> <span class="kw">STD_LOGIC</span>;<span class="cm">--<span class="cj">复位</span></span></div>
<div style="position:absolute;left:177.5px;top:164.81px;font:normal 11.8px/11.8px 'Liberation Mono', monospace;color:#383838;letter-spacing:-0.33px;white-space:pre;">10</div>
<div style="position:absolute;left:210px;top:164.81px;font:normal 11.8px/11.8px 'Liberation Mono', monospace;color:#3c3c3c;letter-spacing:-0.33px;white-space:pre;">      counter  : <span class="kw">OUT</span> <span class="kw">STD_LOGIC_VECTOR</span>(1 <span class="kw">downto</span> 0)<span class="cm">--<span class="cj">计数值</span></span></div>
<div style="position:absolute;left:177.5px;top:177.76px;font:normal 11.8px/11.8px 'Liberation Mono', monospace;color:#383838;letter-spacing:-0.33px;white-space:pre;">11</div>
<div style="position:absolute;left:210px;top:177.76px;font:normal 11.8px/11.8px 'Liberation Mono', monospace;color:#3c3c3c;letter-spacing:-0.33px;white-space:pre;">   );</div>
<div style="position:absolute;left:177.5px;top:190.71px;font:normal 11.8px/11.8px 'Liberation Mono', monospace;color:#383838;letter-spacing:-0.33px;white-space:pre;">12</div>
<div style="position:absolute;left:210px;top:190.71px;font:normal 11.8px/11.8px 'Liberation Mono', monospace;color:#3c3c3c;letter-spacing:-0.33px;white-space:pre;"><span class="kw">END</span> caiyang20224592;</div>
<div style="position:absolute;left:177.5px;top:203.66px;font:normal 11.8px/11.8px 'Liberation Mono', monospace;color:#383838;letter-spacing:-0.33px;white-space:pre;">13</div>
<div style="position:absolute;left:177.5px;top:216.61px;font:normal 11.8px/11.8px 'Liberation Mono', monospace;color:#383838;letter-spacing:-0.33px;white-space:pre;">14</div>
<div style="position:absolute;left:203px;top:219.04999999999998px;width:5px;height:5px;background:#777"></div>
<div style="position:absolute;left:204px;top:221.04999999999998px;width:3px;height:1px;background:#d8d8d8"></div>
<div style="position:absolute;left:210px;top:216.61px;font:normal 11.8px/11.8px 'Liberation Mono', monospace;color:#3c3c3c;letter-spacing:-0.33px;white-space:pre;"><span class="kw">ARCHITECTURE</span> behaveral <span class="kw">OF</span> caiyang20224592 <span class="kw">IS</span></div>
<div style="position:absolute;left:177.5px;top:229.56px;font:normal 11.8px/11.8px 'Liberation Mono', monospace;color:#383838;letter-spacing:-0.33px;white-space:pre;">15</div>
<div style="position:absolute;left:210px;top:229.56px;font:normal 11.8px/11.8px 'Liberation Mono', monospace;color:#3c3c3c;letter-spacing:-0.33px;white-space:pre;">   <span class="kw">SIGNAL</span> counter_temp : <span class="kw">STD_LOGIC_VECTOR</span>(1 <span class="kw">downto</span> 0);</div>
<div style="position:absolute;left:177.5px;top:242.51px;font:normal 11.8px/11.8px 'Liberation Mono', monospace;color:#383838;letter-spacing:-0.33px;white-space:pre;">16</div>
<div style="position:absolute;left:203px;top:244.95000000000002px;width:5px;height:5px;background:#777"></div>
<div style="position:absolute;left:204px;top:246.95000000000002px;width:3px;height:1px;background:#d8d8d8"></div>
<div style="position:absolute;left:210px;top:242.51px;font:normal 11.8px/11.8px 'Liberation Mono', monospace;color:#3c3c3c;letter-spacing:-0.33px;white-space:pre;"><span class="kw">BEGIN</span></div>
<div style="position:absolute;left:177.5px;top:255.46px;font:normal 11.8px/11.8px 'Liberation Mono', monospace;color:#383838;letter-spacing:-0.33px;white-space:pre;">17</div>
<div style="position:absolute;left:177.5px;top:268.41px;font:normal 11.8px/11.8px 'Liberation Mono', monospace;color:#383838;letter-spacing:-0.33px;white-space:pre;">18</div>
<div style="position:absolute;left:210px;top:268.41px;font:normal 11.8px/11.8px 'Liberation Mono', monospace;color:#3c3c3c;letter-spacing:-0.33px;white-space:pre;">   <span class="cm">--<span class="cj">计数控制</span></span></div>
<div style="position:absolute;left:177.5px;top:281.36px;font:normal 11.8px/11.8px 'Liberation Mono', monospace;color:#383838;letter-spacing:-0.33px;white-space:pre;">19</div>
<div style="position:absolute;left:203px;top:283.79999999999995px;width:5px;height:5px;background:#777"></div>
<div style="position:absolute;left:204px;top:285.79999999999995px;width:3px;height:1px;background:#d8d8d8"></div>
<div style="position:absolute;left:210px;top:281.36px;font:normal 11.8px/11.8px 'Liberation Mono', monospace;color:#3c3c3c;letter-spacing:-0.33px;white-space:pre;">   <span class="kw">PROCESS</span> (clk, reset_n)</div>
<div style="position:absolute;left:177.5px;top:294.31px;font:normal 11.8px/11.8px 'Liberation Mono', monospace;color:#383838;letter-spacing:-0.33px;white-space:pre;">20</div>
<div style="position:absolute;left:210px;top:294.31px;font:normal 11.8px/11.8px 'Liberation Mono', monospace;color:#3c3c3c;letter-spacing:-0.33px;white-space:pre;">   <span class="kw">BEGIN</span></div>
<div style="position:absolute;left:177.5px;top:307.26px;font:normal 11.8px/11.8px 'Liberation Mono', monospace;color:#383838;letter-spacing:-0.33px;white-space:pre;">21</div>
<div style="position:absolute;left:203px;top:309.7px;width:5px;height:5px;background:#777"></div>
<div style="position:absolute;left:204px;top:311.7px;width:3px;height:1px;background:#d8d8d8"></div>
<div style="position:absolute;left:210px;top:307.26px;font:normal 11.8px/11.8px 'Liberation Mono', monospace;color:#3c3c3c;letter-spacing:-0.33px;white-space:pre;">      <span class="kw">IF</span> ((<span class="kw">NOT</span>(reset_n)) = '1') <span class="kw">THEN</span></div>
<div style="position:absolute;left:177.5px;top:320.21px;font:normal 11.8px/11.8px 'Liberation Mono', monospace;color:#383838;letter-spacing:-0.33px;white-space:pre;">22</div>
<div style="position:absolute;left:210px;top:320.21px;font:normal 11.8px/11.8px 'Liberation Mono', monospace;color:#3c3c3c;letter-spacing:-0.33px;white-space:pre;">        counter_temp &lt;= <span class="st">"00"</span>;<span class="cm">--<span class="cj">复位</span></span></div>
<div style="position:absolute;left:177.5px;top:333.16px;font:normal 11.8px/11.8px 'Liberation Mono', monospace;color:#383838;letter-spacing:-0.33px;white-space:pre;">23</div>
<div style="position:absolute;left:203px;top:335.59999999999997px;width:5px;height:5px;background:#777"></div>
<div style="position:absolute;left:204px;top:337.59999999999997px;width:3px;height:1px;background:#d8d8d8"></div>
<div style="position:absolute;left:210px;top:333.16px;font:normal 11.8px/11.8px 'Liberation Mono', monospace;color:#3c3c3c;letter-spacing:-0.33px;white-space:pre;">      <span class="kw">ELSIF</span> (clk'<span class="kw">EVENT</span> <span class="kw">AND</span> clk = '1') <span class="kw">THEN</span><span class="cm">--<span class="cj">时钟上升沿</span></span></div>
<div style="position:absolute;left:177.5px;top:346.11px;font:normal 11.8px/11.8px 'Liberation Mono', monospace;color:#383838;letter-spacing:-0.33px;white-space:pre;">24</div>
<div style="position:absolute;left:203px;top:348.54999999999995px;width:5px;height:5px;background:#777"></div>
<div style="position:absolute;left:204px;top:350.54999999999995px;width:3px;height:1px;background:#d8d8d8"></div>
<div style="position:absolute;left:210px;top:346.11px;font:normal 11.8px/11.8px 'Liberation Mono', monospace;color:#3c3c3c;letter-spacing:-0.33px;white-space:pre;">        <span class="kw">IF</span> (counter_temp = <span class="st">"01"</span>) <span class="kw">THEN</span> <span class="cm">--<span class="cj">计数到</span>N-1</span></div>
<div style="position:absolute;left:177.5px;top:359.06px;font:normal 11.8px/11.8px 'Liberation Mono', monospace;color:#383838;letter-spacing:-0.33px;white-space:pre;">25</div>
<div style="position:absolute;left:210px;top:359.06px;font:normal 11.8px/11.8px 'Liberation Mono', monospace;color:#3c3c3c;letter-spacing:-0.33px;white-space:pre;">           counter_temp &lt;= <span class="st">"00"</span>;</div>
<div style="position:absolute;left:177.5px;top:372.01px;font:normal 11.8px/11.8px 'Liberation Mono', monospace;color:#383838;letter-spacing:-0.33px;white-space:pre;">26</div>
<div style="position:absolute;left:203px;top:374.45px;width:5px;height:5px;background:#777"></div>
<div style="position:absolute;left:204px;top:376.45px;width:3px;height:1px;background:#d8d8d8"></div>
<div style="position:absolute;left:210px;top:372.01px;font:normal 11.8px/11.8px 'Liberation Mono', monospace;color:#3c3c3c;letter-spacing:-0.33px;white-space:pre;">        <span class="kw">ELSE</span></div>
<div style="position:absolute;left:177.5px;top:384.96px;font:normal 11.8px/11.8px 'Liberation Mono', monospace;color:#383838;letter-spacing:-0.33px;white-space:pre;">27</div>
<div style="position:absolute;left:210px;top:384.96px;font:normal 11.8px/11.8px 'Liberation Mono', monospace;color:#3c3c3c;letter-spacing:-0.33px;white-space:pre;">           counter_temp &lt;= counter_temp + <span class="st">"01"</span>;<span class="cm">--<span class="cj">计数</span></span></div>
<div style="position:absolute;left:177.5px;top:397.91px;font:normal 11.8px/11.8px 'Liberation Mono', monospace;color:#383838;letter-spacing:-0.33px;white-space:pre;">28</div>
<div style="position:absolute;left:210px;top:397.91px;font:normal 11.8px/11.8px 'Liberation Mono', monospace;color:#3c3c3c;letter-spacing:-0.33px;white-space:pre;">        <span class="kw">END</span> <span class="kw">IF</span>;</div>
<div style="position:absolute;left:177.5px;top:410.86px;font:normal 11.8px/11.8px 'Liberation Mono', monospace;color:#383838;letter-spacing:-0.33px;white-space:pre;">29</div>
<div style="position:absolute;left:210px;top:410.86px;font:normal 11.8px/11.8px 'Liberation Mono', monospace;color:#3c3c3c;letter-spacing:-0.33px;white-space:pre;">      <span class="kw">END</span> <span class="kw">IF</span>;</div>
<div style="position:absolute;left:177.5px;top:423.81px;font:normal 11.8px/11.8px 'Liberation Mono', monospace;color:#383838;letter-spacing:-0.33px;white-space:pre;">30</div>
<div style="position:absolute;left:210px;top:423.81px;font:normal 11.8px/11.8px 'Liberation Mono', monospace;color:#3c3c3c;letter-spacing:-0.33px;white-space:pre;">   <span class="kw">END</span> <span class="kw">PROCESS</span>;</div>
<div style="position:absolute;left:177.5px;top:436.76px;font:normal 11.8px/11.8px 'Liberation Mono', monospace;color:#383838;letter-spacing:-0.33px;white-space:pre;">31</div>
<div style="position:absolute;left:177.5px;top:449.71px;font:normal 11.8px/11.8px 'Liberation Mono', monospace;color:#383838;letter-spacing:-0.33px;white-space:pre;">32</div>
<div style="position:absolute;left:210px;top:449.71px;font:normal 11.8px/11.8px 'Liberation Mono', monospace;color:#3c3c3c;letter-spacing:-0.33px;white-space:pre;">   counter &lt;= counter_temp;<span class="cm">--<span class="cj">输出计数值</span></span></div>
<div style="position:absolute;left:177.5px;top:462.66px;font:normal 11.8px/11.8px 'Liberation Mono', monospace;color:#383838;letter-spacing:-0.33px;white-space:pre;">33</div>
<div style="position:absolute;left:177.5px;top:475.61px;font:normal 11.8px/11.8px 'Liberation Mono', monospace;color:#383838;letter-spacing:-0.33px;white-space:pre;">34</div>
<div style="position:absolute;left:210px;top:475.61px;font:normal 11.8px/11.8px 'Liberation Mono', monospace;color:#3c3c3c;letter-spacing:-0.33px;white-space:pre;"><span class="kw">END</span> behaveral;</div>
<div style="position:absolute;left:177.5px;top:488.56px;font:normal 11.8px/11.8px 'Liberation Mono', monospace;color:#383838;letter-spacing:-0.33px;white-space:pre;">35</div>
<div style="position:absolute;left:230.5px;top:255.0px;width:1px;height:12px;background:#000"></div>
<div style="position:absolute;left:1070px;top:46px;width:10px;height:452px;background:#ececec"></div>
<svg style="position:absolute;left:1073px;top:50px" width="4" height="3"><polygon points="0,3 4,3 2.0,0" fill="#222"/></svg>
<div style="position:absolute;left:1070.5px;top:56.5px;width:9px;height:385px;background:linear-gradient(90deg,#f8f8f8,#e6e6e6 50%,#d2d2d4);border:1px solid #aaa;border-radius:1.5px"></div>
<div style="position:absolute;left:1073px;top:247px;width:3px;height:3px;border-top:1px solid #777;border-bottom:1px solid #777"></div>
<svg style="position:absolute;left:1072.5px;top:491.5px" width="5" height="3"><polygon points="0,0 5,0 2.5,3" fill="#444"/></svg>
<div style="position:absolute;left:155px;top:498px;width:915px;height:9.5px;background:#ececec"></div>
<svg style="position:absolute;left:159.5px;top:500.5px" width="3" height="4"><polygon points="2.5,0 2.5,4 0,2" fill="#555"/></svg>
<div style="position:absolute;left:165px;top:498.5px;width:683px;height:8.5px;background:linear-gradient(#f8f8f8,#e6e6e6 50%,#d2d2d4);border:1px solid #aaa;border-radius:1.5px"></div>
<div style="position:absolute;left:504px;top:501px;width:4px;height:3px;border-left:1px solid #777;border-right:1px solid #777"></div>
<svg style="position:absolute;left:1063.5px;top:500.5px" width="3" height="4"><polygon points="0,0 0,4 2.5,2" fill="#555"/></svg>
<div style="position:absolute;left:1070px;top:498px;width:10px;height:10px;background:#f0f0f0"></div>
<div style="position:absolute;left:0px;top:507.5px;width:1080px;height:65px;background:#f0f0f0"></div>
<div style="position:absolute;left:0px;top:510px;width:1080px;height:1px;background:#a0a0a0"></div>
<div style="position:absolute;left:0px;top:511px;width:1080px;height:1px;background:#fff"></div>
<div style="position:absolute;left:10px;top:513.3px;width:1067.5px;height:1.5px;background:#8a8a8a"></div>
<svg style="position:absolute;left:1.5px;top:515.5px" width="6" height="6" viewBox="0 0 6 6"><path d="M1 1 L5 5 M5 1 L1 5" stroke="#222" stroke-width="1.3"/></svg>
<svg style="position:absolute;left:4px;top:523px" width="3" height="3" viewBox="0 0 3 3"><path d="M0.5 0.5 L2.5 1.5 L0.5 2.5" fill="none" stroke="#777" stroke-width="0.8"/></svg>
<div style="position:absolute;left:4px;top:530px;width:3px;height:15px;border-left:1px solid #999;border-right:1px solid #999"></div>
<div style="position:absolute;left:-8px;top:554px;width:26px;height:8px;transform:rotate(-90deg);font:6.6px/8px 'Liberation Sans';color:#223;letter-spacing:-0.25px;white-space:pre;text-align:center">Messages</div>
<div style="position:absolute;left:10.5px;top:514px;width:1058px;height:31px;background:#fff;border-left:1px solid #8a8a8a"></div>
<div style="position:absolute;left:11px;top:514.8px;width:1057px;height:9.2px;background:#efefef;border-bottom:1.5px solid #7a7a7a"></div>
<div style="position:absolute;left:1066.8px;top:514.8px;width:1.2px;height:9.2px;background:#555"></div>
<div style="position:absolute;left:51px;top:515px;width:2px;height:8px;border-left:1px solid #888;border-right:1px solid #fff"></div>
<div style="position:absolute;left:23.5px;top:517.09px;font:normal 6.8px/6.8px 'Liberation Mono', monospace;color:#111;letter-spacing:-0.13px;white-space:pre;">Type</div>
<div style="position:absolute;left:54px;top:517.09px;font:normal 6.8px/6.8px 'Liberation Mono', monospace;color:#111;letter-spacing:-0.13px;white-space:pre;">Message</div>
<div style="position:absolute;left:16px;top:526px;width:5px;height:5px;border:1px solid #a0a0a0;background:#fff"></div>
<div style="position:absolute;left:17px;top:528px;width:3px;height:1px;background:#333"></div>
<div style="position:absolute;left:18px;top:527px;width:1px;height:3px;background:#333"></div>
<svg style="position:absolute;left:24.5px;top:523.5px" width="10" height="10"><path d="M5 0.6 Q9.4 0.6 9.4 4.2 Q9.4 6.5 6.5 7.5 L5 9.6 L3.5 7.5 Q0.6 6.5 0.6 4.2 Q0.6 0.6 5 0.6Z" fill="#b8d4f4" stroke="#3a6ac0" stroke-width="0.7"/><rect x="4.2" y="3.3" width="1.7" height="3.6" fill="#1a2aa0"/><rect x="4.2" y="1.5" width="1.7" height="1.3" fill="#1a2aa0"/></svg>
<svg style="position:absolute;left:24.5px;top:532px" width="10" height="10"><path d="M5 0.6 Q9.4 0.6 9.4 4.2 Q9.4 6.5 6.5 7.5 L5 9.6 L3.5 7.5 Q0.6 6.5 0.6 4.2 Q0.6 0.6 5 0.6Z" fill="#b8d4f4" stroke="#3a6ac0" stroke-width="0.7"/><rect x="4.2" y="3.3" width="1.7" height="3.6" fill="#1a2aa0"/><rect x="4.2" y="1.5" width="1.7" height="1.3" fill="#1a2aa0"/></svg>
<div style="position:absolute;left:54.5px;top:526.09px;font:normal 6.8px/6.8px 'Liberation Mono', monospace;color:#1a9a30;letter-spacing:-0.13px;white-space:pre;">Info: Quartus II Functional Simulation Netlist Generation was successful. 0 errors, 0 warnings</div>
<div style="position:absolute;left:54.5px;top:534.59px;font:normal 6.8px/6.8px 'Liberation Mono', monospace;color:#1a9a30;letter-spacing:-0.13px;white-space:pre;">Info: *******************************************************************</div>
<div style="position:absolute;left:54.5px;top:544.79px;font:normal 6.8px/6.8px 'Liberation Mono', monospace;color:#1a9a30;letter-spacing:-0.13px;white-space:pre;">Info: Running Quartus II Simulator</div>
<div style="position:absolute;left:16px;top:544.5px;width:5px;height:5px;border:1px solid #a0a0a0;background:#fff"></div>
<div style="position:absolute;left:17px;top:546.5px;width:3px;height:1px;background:#333"></div>
<div style="position:absolute;left:18px;top:545.5px;width:1px;height:3px;background:#333"></div>
<svg style="position:absolute;left:24.5px;top:543px" width="10" height="10"><path d="M5 0.6 Q9.4 0.6 9.4 4.2 Q9.4 6.5 6.5 7.5 L5 9.6 L3.5 7.5 Q0.6 6.5 0.6 4.2 Q0.6 0.6 5 0.6Z" fill="#b8d4f4" stroke="#3a6ac0" stroke-width="0.7"/><rect x="4.2" y="3.3" width="1.7" height="3.6" fill="#1a2aa0"/><rect x="4.2" y="1.5" width="1.7" height="1.3" fill="#1a2aa0"/></svg>
<div style="position:absolute;left:1068px;top:514px;width:9.5px;height:31px;background:#ededed"></div>
<div style="position:absolute;left:1077.5px;top:514px;width:2.5px;height:43px;background:#f4f4f4;border-left:1px solid #ddd"></div>
<svg style="position:absolute;left:1071.5px;top:518.5px" width="3.5" height="2.5"><polygon points="0,2.5 3.5,2.5 1.75,0" fill="#555"/></svg>
<div style="position:absolute;left:1068.5px;top:523.5px;width:9px;height:10px;background:linear-gradient(90deg,#f8f8f8,#e4e4e4 50%,#d2d2d4);border:1px solid #aaa;border-radius:1.5px"></div>
<svg style="position:absolute;left:1071.5px;top:540px" width="4" height="3"><polygon points="0,0 4,0 2,2.5" fill="#555"/></svg>
<div style="position:absolute;left:10.5px;top:545px;width:1067px;height:11px;background:#f0f0f0;border-top:1px solid #8a8a8a"></div>
<div style="position:absolute;left:20px;top:547.71px;font:normal 6.6px/6.6px 'Liberation Sans', sans-serif;color:#111;letter-spacing:-0.35px;white-space:pre;">System (19)</div>
<svg style="position:absolute;left:10px;top:545px" width="6" height="10"><path d="M1 0 L5 10" stroke="#222" stroke-width="0.8" fill="none"/><path d="M1 10 L3 5" stroke="#222" stroke-width="0.8" fill="none"/></svg>
<div style="position:absolute;left:60px;top:544.5px;width:59px;height:10.5px;background:#fff"></div>
<div style="position:absolute;left:62px;top:547.37px;font:bold 7px/7px 'Liberation Sans', sans-serif;color:#000;letter-spacing:-0.05px;white-space:pre;">Processing (16)</div>
<svg style="position:absolute;left:56px;top:545px" width="6" height="10"><path d="M1 0 L5 10" stroke="#222" stroke-width="0.8" fill="none"/><path d="M1 10 L3 5" stroke="#222" stroke-width="0.8" fill="none"/></svg>
<div style="position:absolute;left:123px;top:547.71px;font:normal 6.6px/6.6px 'Liberation Sans', sans-serif;color:#111;letter-spacing:-0.35px;white-space:pre;">Extra Info</div>
<svg style="position:absolute;left:117px;top:545px" width="6" height="10"><path d="M1 0 L5 10" stroke="#222" stroke-width="0.8" fill="none"/><path d="M1 10 L3 5" stroke="#222" stroke-width="0.8" fill="none"/></svg>
<div style="position:absolute;left:162px;top:547.71px;font:normal 6.6px/6.6px 'Liberation Sans', sans-serif;color:#111;letter-spacing:-0.35px;white-space:pre;">Info (16)</div>
<svg style="position:absolute;left:153px;top:545px" width="6" height="10"><path d="M1 0 L5 10" stroke="#222" stroke-width="0.8" fill="none"/><path d="M1 10 L3 5" stroke="#222" stroke-width="0.8" fill="none"/></svg>
<div style="position:absolute;left:197px;top:547.71px;font:normal 6.6px/6.6px 'Liberation Sans', sans-serif;color:#111;letter-spacing:-0.35px;white-space:pre;">Warning</div>
<svg style="position:absolute;left:188px;top:545px" width="6" height="10"><path d="M1 0 L5 10" stroke="#222" stroke-width="0.8" fill="none"/><path d="M1 10 L3 5" stroke="#222" stroke-width="0.8" fill="none"/></svg>
<div style="position:absolute;left:234px;top:547.71px;font:normal 6.6px/6.6px 'Liberation Sans', sans-serif;color:#111;letter-spacing:-0.35px;white-space:pre;">Critical Warning</div>
<svg style="position:absolute;left:225px;top:545px" width="6" height="10"><path d="M1 0 L5 10" stroke="#222" stroke-width="0.8" fill="none"/><path d="M1 10 L3 5" stroke="#222" stroke-width="0.8" fill="none"/></svg>
<div style="position:absolute;left:290px;top:547.71px;font:normal 6.6px/6.6px 'Liberation Sans', sans-serif;color:#111;letter-spacing:-0.35px;white-space:pre;">Error</div>
<svg style="position:absolute;left:282px;top:545px" width="6" height="10"><path d="M1 0 L5 10" stroke="#222" stroke-width="0.8" fill="none"/><path d="M1 10 L3 5" stroke="#222" stroke-width="0.8" fill="none"/></svg>
<div style="position:absolute;left:315px;top:547.71px;font:normal 6.6px/6.6px 'Liberation Sans', sans-serif;color:#111;letter-spacing:-0.35px;white-space:pre;">Suppressed</div>
<svg style="position:absolute;left:305.5px;top:545px" width="6" height="10"><path d="M1 0 L5 10" stroke="#222" stroke-width="0.8" fill="none"/><path d="M1 10 L3 5" stroke="#222" stroke-width="0.8" fill="none"/></svg>
<div style="position:absolute;left:358px;top:547.71px;font:normal 6.6px/6.6px 'Liberation Sans', sans-serif;color:#111;letter-spacing:-0.35px;white-space:pre;">Flag</div>
<svg style="position:absolute;left:350px;top:545px" width="6" height="10"><path d="M1 0 L5 10" stroke="#222" stroke-width="0.8" fill="none"/><path d="M1 10 L3 5" stroke="#222" stroke-width="0.8" fill="none"/></svg>
<svg style="position:absolute;left:372px;top:545px" width="6" height="10"><path d="M5 0 L1 10" stroke="#222" stroke-width="0.8" fill="none"/></svg>
<div style="position:absolute;left:10.5px;top:557.5px;width:83px;height:11px;background:#f0f0f0;border:1px solid #9a9a9a;border-right-color:#fff;border-bottom-color:#fff"></div>
<div style="position:absolute;left:12.5px;top:560.58px;font:normal 6.4px/6.4px 'Liberation Sans', sans-serif;color:#333;letter-spacing:-0.3px;white-space:pre;">Message: 0 of 31</div>
<div style="position:absolute;left:98px;top:557.5px;width:13.5px;height:12px;background:#f0f0f0;border:1px solid #fff;border-right-color:#777;border-bottom-color:#777"></div>
<div style="position:absolute;left:115px;top:557.5px;width:13.5px;height:12px;background:#f0f0f0;border:1px solid #fff;border-right-color:#777;border-bottom-color:#777"></div>
<svg style="position:absolute;left:100.5px;top:559.5px" width="8" height="9" viewBox="0 0 8 9"><path d="M4 0.5 L7.5 4.5 H5.5 V8.5 H2.5 V4.5 H0.5Z" fill="#9a9a9a"/><rect x="4.5" y="6" width="2.5" height="2.5" fill="#c8c8c8"/></svg>
<svg style="position:absolute;left:117.5px;top:559px" width="8" height="9" viewBox="0 0 8 9"><path d="M4 8.5 L7.5 4.5 H5.5 V0.5 H2.5 V4.5 H0.5Z" fill="#9a9a9a"/><rect x="4.5" y="1.5" width="2.5" height="2.5" fill="#c8c8c8"/></svg>
<div style="position:absolute;left:132px;top:557.5px;width:900px;height:11px;background:#f0f0f0;border:1px solid #9a9a9a;border-right-color:#fff;border-bottom-color:#fff"></div>
<div style="position:absolute;left:134px;top:560.58px;font:normal 6.4px/6.4px 'Liberation Sans', sans-serif;color:#aaa;letter-spacing:-0.3px;white-space:pre;">Location:</div>
<div style="position:absolute;left:1022.5px;top:557.5px;width:9px;height:11px;background:#f0f0f0;border:1px solid #fff;border-right-color:#999;border-bottom-color:#999"></div>
<svg style="position:absolute;left:1024.5px;top:562px" width="5" height="3"><polygon points="0,0 5,0 2.5,3" fill="#999"/></svg>
<div style="position:absolute;left:1037px;top:557px;width:42px;height:12.5px;background:#f0f0f0;border:1px solid #fff;border-right-color:#777;border-bottom-color:#777"></div>
<div style="position:absolute;left:1049px;top:561.41px;font:normal 6.6px/6.6px 'Liberation Sans', sans-serif;color:#aaa;letter-spacing:-0.3px;white-space:pre;">Locate</div>
<div style="position:absolute;left:0px;top:572.5px;width:1080px;height:11.5px;background:#f0f0f0;border-top:1px solid #ddd"></div>
<div style="position:absolute;left:1px;top:576.74px;font:normal 7.4px/7.4px 'Liberation Sans', sans-serif;color:#222;letter-spacing:-0.15px;white-space:pre;">For Help, press F1</div>
<div style="position:absolute;left:863px;top:575.5px;width:55px;height:9px;border:1px solid #a0a0a0;border-right-color:#fff;border-bottom:none"></div>
<div style="position:absolute;left:919px;top:575.5px;width:36px;height:9px;border:1px solid #a0a0a0;border-right-color:#fff;border-bottom:none"></div>
<div style="position:absolute;left:956px;top:575.5px;width:66px;height:9px;border:1px solid #a0a0a0;border-right-color:#fff;border-bottom:none"></div>
<div style="position:absolute;left:1023px;top:575.5px;width:16px;height:9px;border:1px solid #a0a0a0;border-right-color:#fff;border-bottom:none"></div>
<div style="position:absolute;left:1040px;top:575.5px;width:22px;height:9px;border:1px solid #a0a0a0;border-right-color:#fff;border-bottom:none"></div>
<div style="position:absolute;left:1063px;top:575.5px;width:17px;height:9px;border:1px solid #a0a0a0;border-right-color:#fff;border-bottom:none"></div>
<div style="position:absolute;left:866px;top:577.57px;font:normal 7px/7px 'Liberation Sans', sans-serif;color:#222;letter-spacing:-0.3px;white-space:pre;">Ln 17, Col 4</div>
<div style="position:absolute;left:984px;top:577.57px;font:normal 7px/7px 'Liberation Sans', sans-serif;color:#222;letter-spacing:-0.3px;white-space:pre;">Idle</div>
<div style="position:absolute;left:1043px;top:577.57px;font:normal 7px/7px 'Liberation Sans', sans-serif;color:#222;letter-spacing:-0.3px;white-space:pre;">NUM</div>
<svg style="position:absolute;left:920.5px;top:576.5px" width="32" height="8" viewBox="0 0 32 8"><path d="M1 2 L3 0.5 L7 4.5 L5 7 L1 3Z" fill="#fff" stroke="#222" stroke-width="0.9"/><path d="M8 3 H11 V1.2 L13.8 4 L11 6.8 V5 H8Z" fill="#111"/><path d="M15 0.5 H18 L19.5 2 V7.5 H15Z" fill="#555" stroke="#222" stroke-width="0.6"/><ellipse cx="23" cy="4.3" rx="2" ry="1.6" fill="#f4e800"/><rect x="26.5" y="1.5" width="4" height="5.5" fill="#a8a8a8"/></svg>
</body></html>
